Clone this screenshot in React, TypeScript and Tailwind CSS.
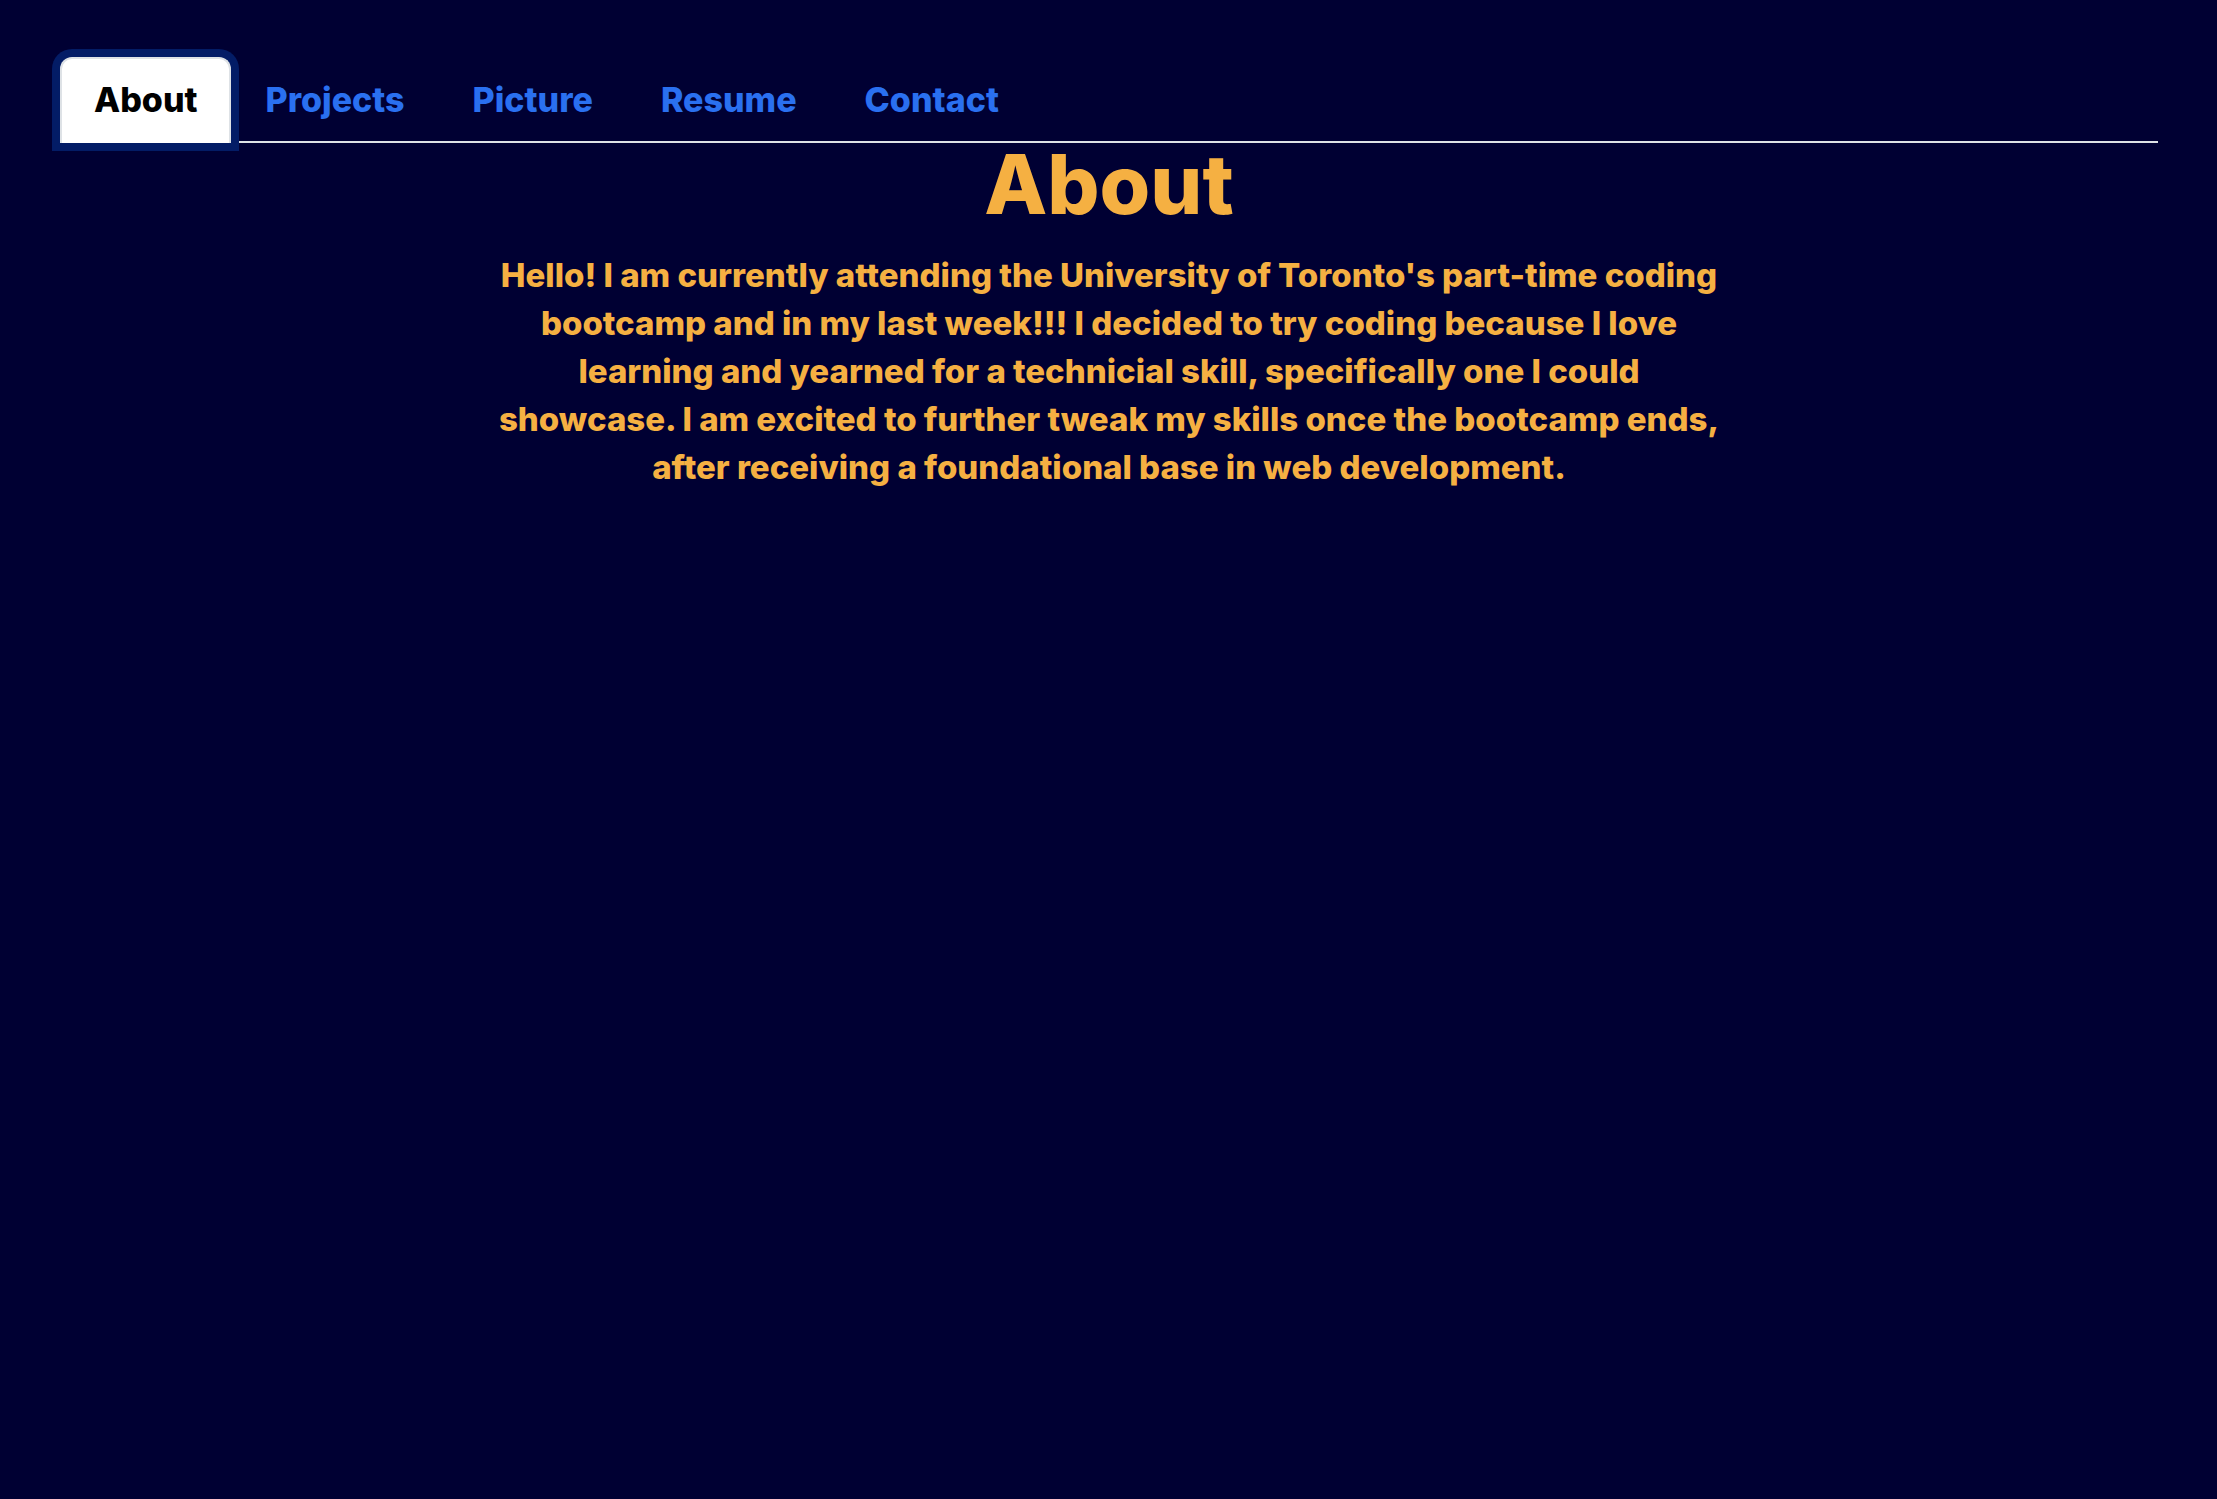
import React from 'react';

const tabs = ['About', 'Projects', 'Picture', 'Resume', 'Contact'];

export default function App() {
  const active = 'About';
  return (
    <div
      className="min-h-screen w-full bg-[#000033] pt-[57px] pl-[60px] pr-[59px]"
      style={{ fontFamily: 'Inter, "Noto Sans", sans-serif' }}
    >
      <nav className="flex border-b-2 border-[#dee2e6]">
        {tabs.map((t) => (
          <a
            key={t}
            href="#"
            className={
              t === active
                ? 'relative -mb-[2px] rounded-t-[12px] border-2 border-b-0 border-[#dee2e6] bg-white px-[32px] py-[16px] text-[34px] font-extrabold leading-[50px] text-black shadow-[0_0_0_8px_#031c66]'
                : '-mb-[2px] border-2 border-transparent px-[32px] py-[16px] text-[34px] font-extrabold leading-[50px] text-[#2a70f0]'
            }
          >
            {t}
          </a>
        ))}
      </nav>

      <main className="flex flex-col items-center text-[#f5b042]">
        <h1 className="text-[82px] font-extrabold leading-[84px]">About</h1>
        <p className="mt-[24px] text-center text-[33px] font-extrabold leading-[48px]">
          Hello! I am currently attending the University of Toronto's part-time coding
          <br />
          bootcamp and in my last week!!! I decided to try coding because I love
          <br />
          learning and yearned for a technicial skill, specifically one I could
          <br />
          showcase. I am excited to further tweak my skills once the bootcamp ends,
          <br />
          after receiving a foundational base in web development.
        </p>
      </main>
    </div>
  );
}
